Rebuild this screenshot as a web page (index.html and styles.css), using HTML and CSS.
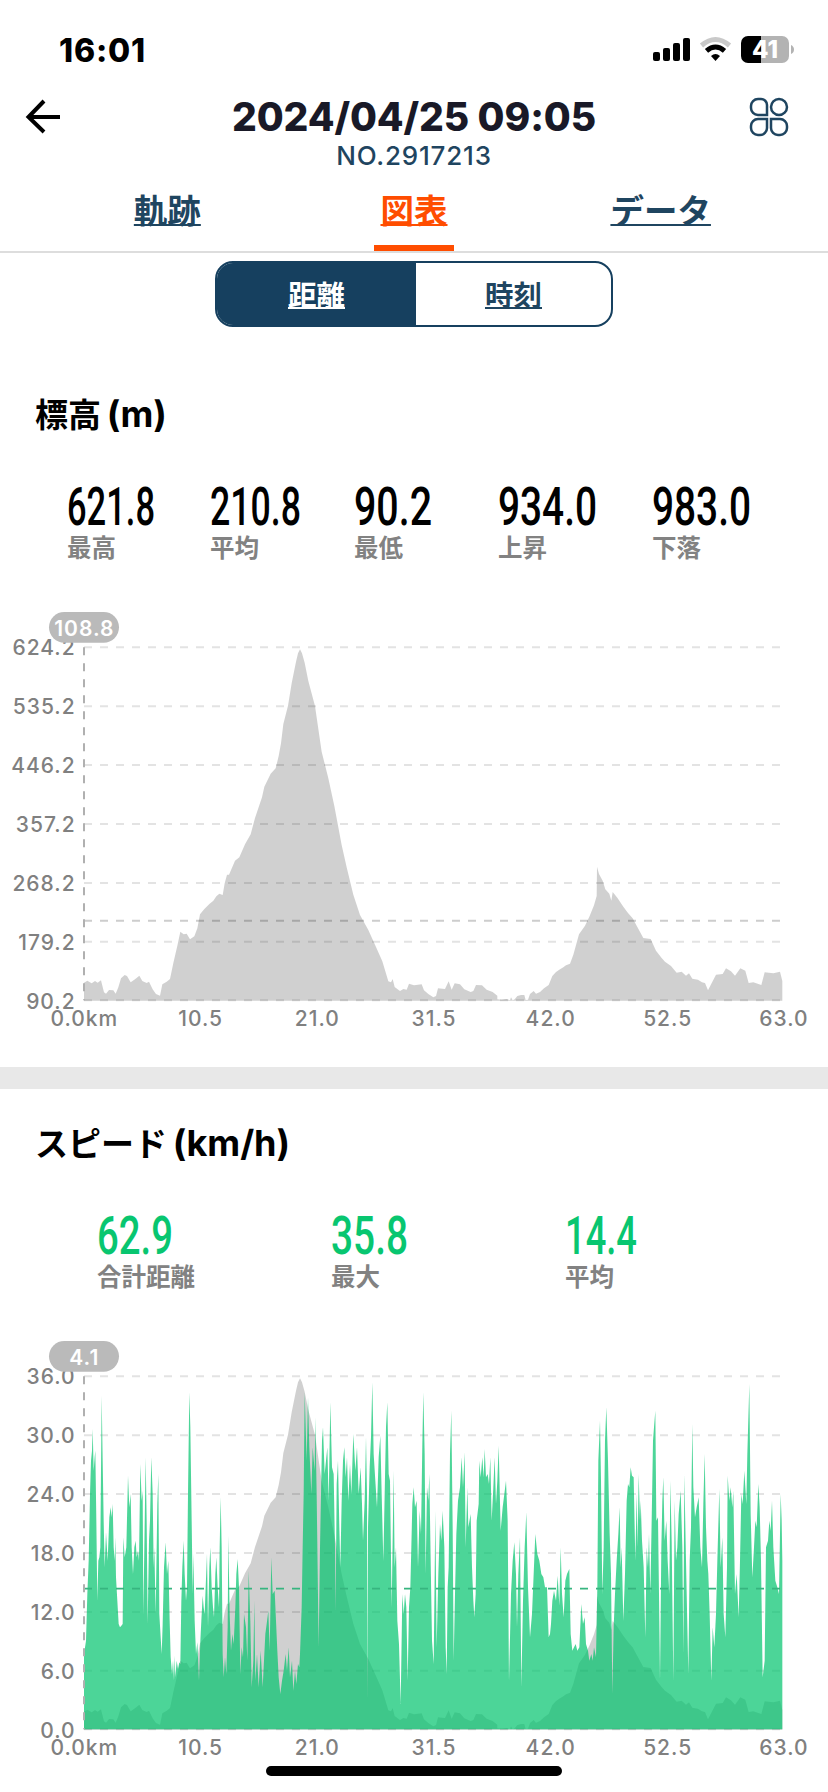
FILE: index.html
```html
<!DOCTYPE html>
<html lang="ja">
<head>
    <meta charset="UTF-8">
    <meta name="viewport" content="width=device-width, initial-scale=1.0">
    <title>2024/04/25 09:05</title>
    <link rel="stylesheet" href="styles.css">
</head>
<body>

    <div class="status-bar">
        <span class="clock">16:01</span>
        <svg class="status-icons" viewBox="0 0 144 30" width="144" height="30">
            <rect x="0" y="17" width="7" height="9" rx="2"/>
            <rect x="10" y="13" width="7" height="13" rx="2"/>
            <rect x="20" y="8" width="7" height="18" rx="2"/>
            <rect x="30" y="3" width="7" height="23" rx="2"/>
            <path d="M48.5 10.5 Q62.500 -1.500 76.500 10.500" fill="none" stroke="#c9c9c9" stroke-width="5"/>
            <path d="M53.500 15.800 Q62.500 8.200 71.500 15.800" fill="none" stroke="#000" stroke-width="5"/>
            <path d="M58 21 Q62.500 17 67 21 L62.500 26 Z"/>
            <path d="M95 1 h13 v27 h-13 a7 7 0 0 1 -7 -7 v-13 a7 7 0 0 1 7 -7 z"/>
            <path d="M108 1 h21 a7 7 0 0 1 7 7 v13 a7 7 0 0 1 -7 7 h-21 z" fill="#b3b3b3"/>
            <path d="M138 10 q3 1.500 3 4.500 q0 3 -3 4.500 z" fill="#b3b3b3"/>
            <text class="battery" x="112" y="23">41</text>
        </svg>
    </div>

    <header>
        <svg class="back" viewBox="0 0 36 36" width="36" height="36">
            <path d="M19 2 L3.500 18 L19 33 M4 18 H35"/>
        </svg>
        <div class="title">
            <h1>2024/04/25 09:05</h1>
            <p>NO.2917213</p>
        </div>
        <svg class="grid-icon" viewBox="0 0 40 40" width="40" height="40">
            <path d="M9 2 h3 a6 6 0 0 1 6 6 v10 h-9 a7 7 0 0 1 -7 -7 v-2 a7 7 0 0 1 7 -7 z"/>
            <circle cx="30" cy="10" r="8"/>
            <path d="M9 22 h9 v9 a7 7 0 0 1 -7 7 h-2 a7 7 0 0 1 -7 -7 v-2 a7 7 0 0 1 7 -7 z"/>
            <path d="M22 22 h9 a7 7 0 0 1 7 7 v2 a7 7 0 0 1 -7 7 h-2 a7 7 0 0 1 -7 -7 z"/>
        </svg>
    </header>

    <nav>
        <a href="#">軌跡</a>
        <a href="#" class="active">図表</a>
        <a href="#">データ</a>
    </nav>

    <div class="toggle">
        <a href="#" class="selected">距離</a>
        <a href="#">時刻</a>
    </div>

    <section class="altitude">
        <h2>標高 <span>(m)</span></h2>
        <div class="stats">
            <div class="stat">
                <svg width="88" height="44"><text x="0" y="41" textLength="88" lengthAdjust="spacingAndGlyphs">621.8</text></svg>
                <span>最高</span>
            </div>
            <div class="stat">
                <svg width="91" height="44"><text x="0" y="41" textLength="91" lengthAdjust="spacingAndGlyphs">210.8</text></svg>
                <span>平均</span>
            </div>
            <div class="stat">
                <svg width="78" height="44"><text x="0" y="41" textLength="78" lengthAdjust="spacingAndGlyphs">90.2</text></svg>
                <span>最低</span>
            </div>
            <div class="stat">
                <svg width="99" height="44"><text x="0" y="41" textLength="99" lengthAdjust="spacingAndGlyphs">934.0</text></svg>
                <span>上昇</span>
            </div>
            <div class="stat">
                <svg width="99" height="44"><text x="0" y="41" textLength="99" lengthAdjust="spacingAndGlyphs">983.0</text></svg>
                <span>下落</span>
            </div>
        </div>
        <svg class="chart" viewBox="0 0 2484 1320" width="828" height="440">
            <defs>
                <path id="elevation" d="M252 1202 V1148 L262 1142 L275 1150 L285 1143 L293 1148 L303 1141 L312 1177 L318 1181 L327 1170 L340 1171 L347 1181 L355 1162 L363 1135 L374 1125 L381 1128 L392 1147 L405 1138 L418 1127 L427 1143 L440 1149 L447 1145 L458 1168 L468 1182 L480 1187 L487 1153 L500 1145 L510 1137 L520 1089 L532 1037 L541 995 L551 1003 L560 1001 L570 1018 L583 1009 L592 985 L600 943 L613 927 L628 912 L640 902 L649 889 L658 881 L668 885 L674 850 L681 824 L687 824 L705 782 L718 772 L735 733 L752 703 L765 654 L786 592 L793 560 L812 521 L827 505 L836 468 L843 430 L850 372 L864 317 L875 250 L888 185 L894 160 L900 148 L906 160 L914 188 L925 243 L945 318 L965 455 L985 535 L1003 618 L1025 735 L1040 802 L1060 884 L1080 945 L1105 990 L1125 1034 L1147 1084 L1165 1144 L1173 1147 L1178 1137 L1184 1161 L1200 1173 L1210 1167 L1220 1169 L1227 1151 L1242 1156 L1265 1153 L1272 1171 L1285 1182 L1300 1192 L1308 1188 L1314 1165 L1335 1167 L1346 1144 L1355 1169 L1364 1150 L1380 1153 L1393 1168 L1412 1176 L1420 1173 L1428 1155 L1446 1156 L1460 1169 L1478 1176 L1492 1187 V1198 L1505 1199 L1520 1197 L1530 1201 L1533 1192 L1538 1201 L1544 1198 L1552 1188 L1563 1185 L1573 1185 L1577 1200 L1584 1199 L1590 1182 L1601 1173 L1608 1181 L1620 1176 L1632 1165 L1646 1155 L1657 1128 L1668 1116 L1680 1108 L1690 1102 L1698 1096 L1710 1091 L1720 1064 L1737 1003 L1755 977 L1768 950 L1782 916 L1790 888 L1791 800 L1797 822 L1808 842 L1816 868 L1828 881 L1834 902 L1838 876 L1852 893 L1870 920 L1884 939 L1898 955 L1910 977 L1930 1014 L1952 1017 L1968 1052 L1985 1074 L1995 1085 L2013 1098 L2030 1118 L2045 1115 L2058 1127 L2067 1120 L2077 1136 L2094 1139 L2106 1147 L2115 1149 L2124 1171 L2134 1151 L2148 1124 L2168 1122 L2178 1105 L2193 1114 L2205 1127 L2221 1105 L2236 1112 L2246 1149 L2260 1147 L2284 1155 L2294 1117 L2320 1120 L2340 1115 L2347 1143 V1202 Z"/>
            </defs>
            <g class="grid">
                <path d="M252 142 H2347 M252 319 H2347 M252 495 H2347 M252 672 H2347 M252 849 H2347 M252 1025 H2347 M252 1201 H2347"/>
                <path class="average" d="M252 962 H2347"/>
            </g>
            <use href="#elevation" class="elevation"/>
            <path class="cursor" d="M252 142 V1201"/>
            <g class="y-labels">
                <text x="227" y="165">624.2</text>
                <text x="227" y="342">535.2</text>
                <text x="227" y="519">446.2</text>
                <text x="227" y="695">357.2</text>
                <text x="227" y="872">268.2</text>
                <text x="227" y="1049">179.2</text>
                <text x="227" y="1226">90.2</text>
            </g>
            <g class="x-labels">
                <text x="253" y="1278">0.0km</text>
                <text x="602" y="1278">10.5</text>
                <text x="952" y="1278">21.0</text>
                <text x="1302" y="1278">31.5</text>
                <text x="1652" y="1278">42.0</text>
                <text x="2003" y="1278">52.5</text>
                <text x="2352" y="1278">63.0</text>
            </g>
            <rect class="pill" x="147" y="36" width="210" height="92" rx="46"/>
            <text class="pill-text" x="253" y="107">108.8</text>
        </svg>
    </section>

    <section class="speed">
        <h2>スピード <span>(km/h)</span></h2>
        <div class="stats">
            <div class="stat">
                <svg width="76" height="44"><text x="0" y="41" textLength="76" lengthAdjust="spacingAndGlyphs">62.9</text></svg>
                <span>合計距離</span>
            </div>
            <div class="stat">
                <svg width="77" height="44"><text x="0" y="41" textLength="77" lengthAdjust="spacingAndGlyphs">35.8</text></svg>
                <span>最大</span>
            </div>
            <div class="stat">
                <svg width="72" height="44"><text x="0" y="41" textLength="72" lengthAdjust="spacingAndGlyphs">14.4</text></svg>
                <span>平均</span>
            </div>
        </div>
        <svg class="chart" viewBox="0 0 2484 1320" width="828" height="440">
            <g class="grid">
                <path d="M252 142 H2347 M252 319 H2347 M252 495 H2347 M252 672 H2347 M252 849 H2347 M252 1025 H2347 M252 1201 H2347"/>
            </g>
            <use href="#elevation" class="elevation"/>
            <g class="speed-area">
                <path transform="translate(180 95)" d="M72 1106 V880 L78 840 L82 700 L86 600 L90 400 L93 300 L96 270 L98 205 L101 330 L104 290 L106 270 L109 480 L112 720 L115 600 L118 590 L121 560 L125 105 L128 300 L131 480 L134 620 L138 515 L143 600 L148 470 L152 440 L155 470 L158 430 L161 560 L164 600 L166 530 L168 650 L172 720 L176 790 L180 800 L184 795 L188 790 L190 530 L194 590 L199 560 L204 345 L208 440 L212 400 L215 560 L219 640 L223 560 L227 540 L230 590 L234 570 L237 600 L241 310 L245 420 L248 390 L250 760 L253 560 L257 290 L260 480 L263 790 L267 540 L270 480 L274 290 L278 400 L281 620 L283 560 L287 760 L292 430 L295 340 L298 760 L302 830 L305 880 L308 790 L312 620 L317 545 L321 640 L325 600 L329 780 L332 890 L336 940 L339 900 L342 960 L344 885 L346 950 L350 900 L354 925 L358 905 L361 910 L364 720 L367 620 L371 540 L374 640 L378 720 L381 680 L384 400 L388 95 L391 200 L395 480 L398 700 L400 580 L404 780 L408 880 L412 845 L417 960 L421 840 L424 780 L428 705 L431 740 L434 760 L437 680 L441 580 L444 800 L448 620 L451 560 L455 680 L459 740 L462 770 L466 640 L469 590 L473 680 L477 740 L479 560 L482 410 L485 560 L488 880 L491 950 L495 890 L499 940 L503 800 L505 525 L509 760 L513 870 L517 820 L521 850 L526 740 L529 640 L533 595 L537 680 L541 940 L545 860 L549 890 L552 760 L558 800 L562 900 L566 630 L571 780 L575 980 L580 900 L583 720 L586 960 L591 880 L596 980 L602 870 L608 980 L612 900 L616 820 L620 790 L625 750 L629 870 L634 590 L638 700 L644 690 L648 780 L652 870 L656 950 L661 1000 L666 960 L671 930 L677 880 L681 930 L686 860 L690 950 L696 900 L700 990 L705 930 L709 970 L714 910 L718 920 L720 880 V1106 Z"/>
                <path transform="translate(900 95)" d="M0 1106 V880 L5 740 L8 560 L11 400 L14 95 L20 300 L24 110 L28 260 L34 400 L38 260 L44 330 L46 170 L50 400 L56 860 L60 560 L63 400 L66 240 L69 200 L74 340 L78 300 L82 260 L86 420 L91 125 L96 320 L101 340 L105 560 L107 750 L110 370 L114 300 L118 500 L121 620 L125 420 L129 300 L133 260 L137 350 L141 290 L145 420 L150 310 L154 400 L160 220 L166 330 L171 260 L176 400 L182 320 L186 430 L189 540 L194 420 L198 230 L201 400 L202 1020 L204 500 L209 320 L213 230 L217 65 L221 280 L226 360 L231 440 L236 290 L241 225 L245 400 L250 600 L254 400 L258 200 L262 125 L266 340 L270 360 L275 740 L281 330 L284 620 L288 560 L292 780 L297 850 L302 1030 L307 700 L311 760 L315 700 L319 740 L323 960 L327 740 L331 680 L334 560 L337 430 L341 380 L345 440 L350 420 L354 620 L359 450 L363 520 L367 250 L370 95 L374 280 L377 640 L381 380 L385 420 L388 340 L392 600 L396 840 L401 910 L404 640 L406 450 L410 860 L415 640 L420 490 L424 540 L428 450 L433 560 L437 860 L440 940 L443 680 L446 620 L450 280 L454 150 L458 500 L461 900 L465 700 L469 520 L474 420 L480 380 L485 290 L489 380 L494 275 L497 560 L502 380 L505 500 L512 460 L516 620 L520 720 L523 770 L527 700 L530 480 L536 430 L538 300 L542 350 L547 290 L551 350 L554 265 L558 350 L563 340 L567 370 L571 290 L575 480 L580 380 L584 290 L588 430 L592 360 L596 255 L602 510 L608 440 L613 400 L618 360 L623 480 L627 960 L633 700 L638 600 L643 545 L648 640 L651 800 L655 640 L660 530 L664 980 L669 720 L674 560 L679 455 L684 680 L690 830 L696 760 L701 640 L706 520 L712 580 L718 600 L724 640 L730 650 L735 680 L741 680 L746 830 L750 820 V1106 Z"/>
                <path transform="translate(1620 95)" d="M30 1106 V820 L33 790 L37 720 L42 690 L48 720 L53 645 L58 735 L62 560 L66 700 L71 770 L76 660 L81 640 L88 625 L92 820 L97 870 L102 860 L107 850 L112 870 L118 860 L124 730 L129 790 L134 770 L138 850 L144 870 L148 900 L154 880 L158 900 L162 860 L168 890 L172 680 L175 300 L180 180 L183 360 L187 700 L191 560 L195 240 L199 140 L204 300 L209 520 L213 640 L217 1000 L221 800 L225 700 L230 600 L235 520 L239 440 L242 620 L245 560 L250 780 L255 640 L260 420 L264 370 L268 380 L272 320 L276 345 L281 350 L286 600 L290 400 L293 560 L296 340 L300 480 L302 420 L306 540 L311 620 L316 830 L320 560 L324 620 L327 520 L331 700 L335 480 L339 240 L342 200 L346 150 L349 480 L354 470 L357 700 L360 960 L364 560 L367 420 L370 350 L374 540 L379 480 L383 600 L388 700 L391 360 L395 540 L400 960 L404 420 L408 600 L412 560 L416 460 L422 390 L427 560 L430 880 L433 340 L438 600 L445 940 L449 600 L453 500 L457 190 L460 380 L465 470 L470 440 L476 410 L481 560 L486 620 L490 430 L494 280 L498 500 L502 600 L505 640 L509 760 L514 960 L518 800 L523 860 L528 760 L532 600 L538 385 L542 620 L547 530 L551 760 L556 830 L561 620 L563 345 L568 420 L572 380 L577 440 L580 390 L585 700 L590 640 L596 770 L600 600 L604 400 L608 430 L613 330 L619 430 L622 280 L628 70 L632 460 L637 650 L642 560 L646 480 L650 500 L655 370 L659 440 L663 600 L668 950 L674 900 L678 560 L684 540 L688 480 L692 510 L696 420 L700 560 L706 660 L712 680 L717 700 L722 400 L725 480 L727 600 V1106 Z"/>
            </g>
            <path class="speed-average" d="M252 779 H2347"/>
            <path class="cursor" d="M252 142 V1201"/>
            <g class="y-labels">
                <text x="227" y="165">36.0</text>
                <text x="227" y="342">30.0</text>
                <text x="227" y="519">24.0</text>
                <text x="227" y="695">18.0</text>
                <text x="227" y="872">12.0</text>
                <text x="227" y="1049">6.0</text>
                <text x="227" y="1226">0.0</text>
            </g>
            <g class="x-labels">
                <text x="253" y="1278">0.0km</text>
                <text x="602" y="1278">10.5</text>
                <text x="952" y="1278">21.0</text>
                <text x="1302" y="1278">31.5</text>
                <text x="1652" y="1278">42.0</text>
                <text x="2003" y="1278">52.5</text>
                <text x="2352" y="1278">63.0</text>
            </g>
            <rect class="pill" x="147" y="36" width="210" height="92" rx="46"/>
            <text class="pill-text" x="253" y="107">4.1</text>
        </svg>
    </section>

    <div class="home-indicator"></div>

</body>
</html>
```
FILE: styles.css
```css
* {
    box-sizing: border-box;
}
body {
    position: relative;
    width: 828px;
    height: 1792px;
    margin: 0;
    overflow: hidden;
    background-color: #fff;
    color: #000;
    font-family: Inter, "Noto Sans CJK JP", sans-serif;
}
svg {
    display: block;
}
.status-bar {
    display: flex;
    justify-content: space-between;
    align-items: center;
    height: 100px;
    padding: 0 31px 0 59px;
}
.clock {
    font-size: 32px;
    font-weight: 800;
    letter-spacing: 0.8px;
}
.battery {
    font-size: 24px;
    font-weight: 800;
    text-anchor: middle;
    fill: #fff;
}
header {
    display: flex;
    justify-content: space-between;
    align-items: flex-start;
    height: 80px;
    padding: 0 39px 0 25px;
}
.back {
    margin-top: -1px;
    fill: none;
    stroke: #000;
    stroke-width: 4;
}
.title {
    width: 420px;
    margin-left: 18px;
    text-align: center;
}
.title h1 {
    margin: -6px 0 0;
    font-size: 39px;
    line-height: 46px;
    font-weight: 800;
    letter-spacing: -0.1px;
    color: #191927;
}
.title p {
    margin: 0;
    font-size: 26px;
    line-height: 32px;
    font-weight: 500;
    letter-spacing: 0.8px;
    color: #1f4560;
}
.grid-icon {
    margin-top: -3px;
    fill: none;
    stroke: #1f4560;
    stroke-width: 2.5;
}
nav {
    display: flex;
    height: 73px;
    padding: 0 44px;
    border-bottom: 2px solid #ddd;
}
nav a {
    position: relative;
    flex: 1;
    font-family: "Noto Sans CJK JP", sans-serif;
    font-size: 33.5px;
    line-height: 58px;
    font-weight: 700;
    text-align: center;
    color: #1f4560;
    text-decoration: underline;
    text-decoration-thickness: 2px;
    text-underline-offset: 1px;
    text-decoration-skip-ink: none;
}
nav a.active {
    color: #ff4d00;
}
nav a.active::after {
    content: "";
    position: absolute;
    left: 50%;
    bottom: 0;
    width: 80px;
    height: 6px;
    margin-left: -40px;
    background-color: #ff4d00;
}
.toggle {
    display: flex;
    width: 398px;
    height: 66px;
    margin: 8px auto 0;
    border: 2px solid #16405f;
    border-radius: 18px;
    overflow: hidden;
}
.toggle a {
    width: 195px;
    font-family: "Noto Sans CJK JP", sans-serif;
    font-size: 28.5px;
    line-height: 61px;
    font-weight: 700;
    text-align: center;
    color: #1f4560;
    text-decoration: underline;
    text-decoration-thickness: 2px;
    text-underline-offset: 1px;
    text-decoration-skip-ink: none;
}
.toggle a.selected {
    width: 199px;
    background-color: #16405f;
    color: #fff;
}
section h2 {
    height: 50px;
    margin: 0;
    padding-left: 35px;
    font-size: 33px;
    line-height: 50px;
    font-weight: 700;
    word-spacing: -2px;
}
section h2 span {
    font-size: 36px;
    line-height: 1;
}
.altitude {
    height: 740px;
    padding-top: 63px;
}
.speed {
    height: 725px;
    padding-top: 30px;
    border-top: 22px solid #e8e8e8;
}
.stats {
    display: grid;
    height: 78px;
    margin-top: 44px;
}
.stat svg {
    overflow: visible;
}
.stat text {
    font-family: Roboto, sans-serif;
    font-size: 53px;
    font-weight: 500;
}
.stat span {
    display: block;
    font-family: "Noto Sans CJK JP", sans-serif;
    font-size: 24.5px;
    line-height: 37px;
    font-weight: 700;
    color: #828282;
}
.altitude .stats {
    grid-template-columns: 143px 144px 144px 154px auto;
    padding-left: 67px;
}
.speed .stats {
    grid-template-columns: 234px 234px auto;
    padding-left: 97px;
}
.speed .stat text {
    fill: #08c670;
}
.chart {
    margin-top: 38px;
}
.grid path {
    fill: none;
    stroke: #e3e3e3;
    stroke-width: 6;
    stroke-dasharray: 24 24;
}
.grid .average {
    stroke: #cdcdcd;
}
.elevation {
    fill: rgba(0, 0, 0, 0.184);
}
.speed-area {
    fill: #00c36c;
    fill-opacity: 0.7;
}
.speed-average {
    fill: none;
    stroke: #37b57f;
    stroke-width: 5;
    stroke-dasharray: 24 24;
}
.cursor {
    fill: none;
    stroke: #b0b0b0;
    stroke-width: 6;
    stroke-dasharray: 24 24;
}
.y-labels text,
.x-labels text {
    font-size: 63px;
    font-weight: 550;
    letter-spacing: 3px;
    fill: #808080;
}
.y-labels text {
    text-anchor: end;
}
.x-labels text {
    text-anchor: middle;
}
.pill {
    fill: #bababa;
}
.pill-text {
    font-size: 63px;
    font-weight: 600;
    letter-spacing: 3px;
    text-anchor: middle;
    fill: #fff;
}
.home-indicator {
    position: absolute;
    left: 266px;
    bottom: 16px;
    width: 296px;
    height: 10px;
    border-radius: 5px;
    background-color: #000;
}
```
